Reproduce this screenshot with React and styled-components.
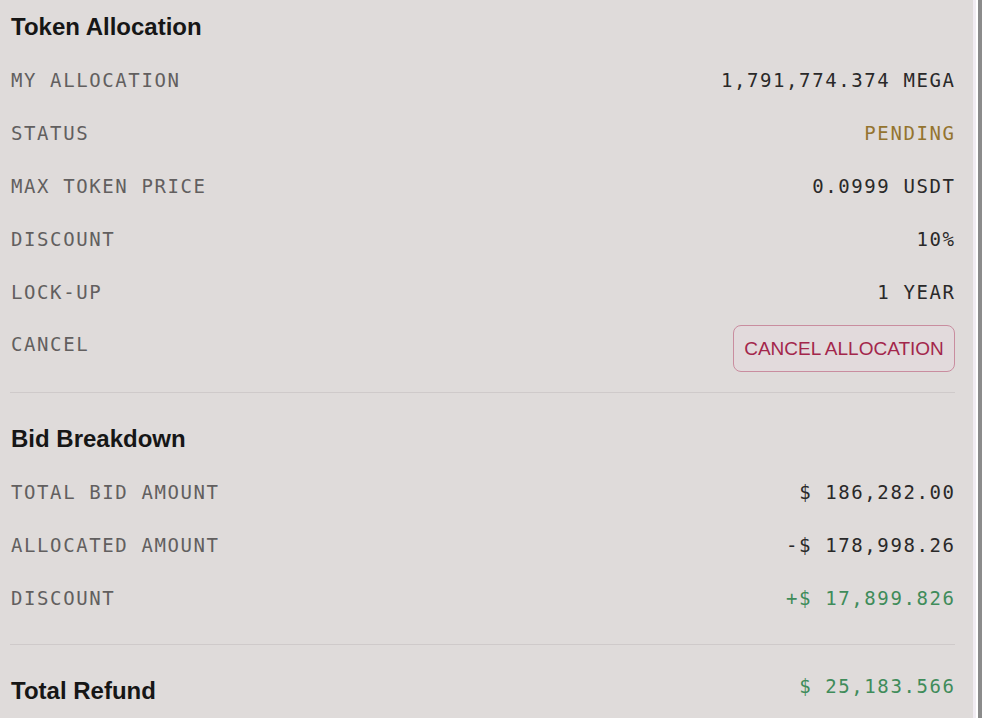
import styled, { createGlobalStyle } from 'styled-components';

const GlobalStyle = createGlobalStyle`
  html, body {
    margin: 0;
    padding: 0;
    background: #ffffff;
  }
  body {
    font-family: "Liberation Sans", Arial, sans-serif;
  }
`;

const allocation = [
  { label: 'MY ALLOCATION', value: '1,791,774.374 MEGA' },
  { label: 'STATUS', value: 'PENDING', tone: 'pending' },
  { label: 'MAX TOKEN PRICE', value: '0.0999 USDT' },
  { label: 'DISCOUNT', value: '10%' },
  { label: 'LOCK-UP', value: '1 YEAR' }
];

const breakdown = [
  { label: 'TOTAL BID AMOUNT', value: '$ 186,282.00' },
  { label: 'ALLOCATED AMOUNT', value: '-$ 178,998.26' },
  { label: 'DISCOUNT', value: '+$ 17,899.826', tone: 'positive' }
];

const App = () => {
  return (
    <Page>
      <GlobalStyle />
      <Panel>
        <Heading>Token Allocation</Heading>
        { allocation.map((row) =>
          <Row key={ row.label }>
            <Label>{ row.label }</Label>
            <Value tone={ row.tone }>{ row.value }</Value>
          </Row>
        ) }
        <CancelRow>
          <Label>CANCEL</Label>
          <CancelButton type="button">CANCEL ALLOCATION</CancelButton>
        </CancelRow>
        <Divider />
        <Heading>Bid Breakdown</Heading>
        { breakdown.map((row) =>
          <Row key={ row.label }>
            <Label>{ row.label }</Label>
            <Value tone={ row.tone }>{ row.value }</Value>
          </Row>
        ) }
        <Divider />
        <TotalRow>
          <TotalTitle>Total Refund</TotalTitle>
          <TotalValue tone="positive">$ 25,183.566</TotalValue>
        </TotalRow>
      </Panel>
      <Edge />
      <Scrollbar />
    </Page>
  );
};

const Page = styled.div`
  display: flex;
  width: 982px;
  height: 718px;
  overflow: hidden;
  background: #ffffff;
`;
const Panel = styled.div`
  width: 973px;
  flex-shrink: 0;
  box-sizing: border-box;
  padding: 0 18px 0 10px;
  background: #dfdbda;
  display: flex;
  flex-direction: column;
`;
const Edge = styled.div`
  width: 3px;
  background: #f1ecf2;
`;
const Scrollbar = styled.div`
  margin-left: 2px;
  width: 4px;
  background: #8b8b8b;
`;
const Heading = styled.h2`
  margin: 0;
  height: 53px;
  display: flex;
  align-items: center;
  padding-left: 1px;
  font-family: "Liberation Sans", Arial, sans-serif;
  font-weight: 700;
  font-size: 24px;
  color: #161616;
`;
const Row = styled.div`
  height: 53px;
  display: flex;
  align-items: center;
  justify-content: space-between;
`;
const Label = styled.span`
  padding-left: 1px;
  font-family: "DejaVu Sans Mono", "Liberation Mono", monospace;
  font-size: 19px;
  letter-spacing: 1.6px;
  color: #625f5f;
`;
const toneColor = {
  pending: '#94742f',
  positive: '#3f8c5a'
};
const Value = styled.span`
  font-family: "DejaVu Sans Mono", "Liberation Mono", monospace;
  font-size: 19px;
  letter-spacing: 1.6px;
  margin-right: -0.6px;
  color: ${ (p) => toneColor[p.tone] || '#2a2929' };
`;
const CancelRow = styled.div`
  display: flex;
  justify-content: space-between;
  align-items: flex-start;
  line-height: 53px;
`;
const CancelButton = styled.button`
  margin-top: 7px;
  height: 47px;
  width: 222px;
  border: 1px solid #c98d9f;
  border-radius: 8px;
  background: #e2dadc;
  color: #a3264b;
  font-family: "Liberation Sans", Arial, sans-serif;
  font-size: 19px;
  cursor: pointer;
`;
const Divider = styled.hr`
  margin: 20px 0 19px;
  border: none;
  height: 1px;
  background: #cfcaca;
`;
const TotalRow = styled.div`
  height: 54px;
  display: flex;
  align-items: center;
  justify-content: space-between;
`;
const TotalTitle = styled(Heading)`
  height: auto;
`;
const TotalValue = styled(Value)`
  margin-bottom: 10px;
`;

export default App;
